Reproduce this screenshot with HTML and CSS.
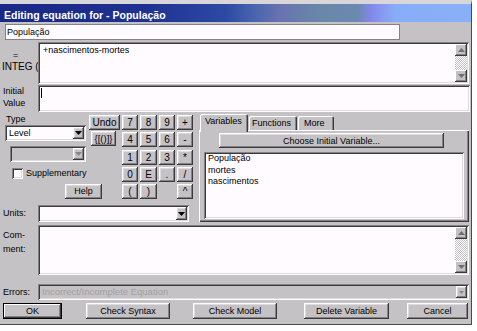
FILE: index.html
```html
<!DOCTYPE html>
<html>
<head>
<meta charset="utf-8">
<link rel="stylesheet" href="styles.css">
</head>
<body>
<div class="win">
  <div class="title">Editing equation for - População</div>
  <div class="content">
    <div class="r-name"><div class="field name">População</div></div>

    <div class="r-eq">
      <div class="lbl eq-lbl"><div class="eqsign">=</div><div class="integ">INTEG (</div></div>
      <div class="field sunken eq">
        <div class="txt">+nascimentos-mortes</div>
        <div class="vscroll">
          <div class="sbtn"><svg width="7" height="4" viewBox="0 0 7 4"><polygon points="3.5,0 7,4 0,4" fill="#707070"/></svg></div>
          <div class="track"></div>
          <div class="sbtn"><svg width="7" height="4" viewBox="0 0 7 4"><polygon points="0,0 7,0 3.5,4" fill="#707070"/></svg></div>
        </div>
      </div>
    </div>

    <div class="r-init">
      <div class="lbl init-lbl">Initial<br>Value</div>
      <div class="field sunken init"><span class="caret"></span></div>
    </div>

    <div class="mid">
      <div class="left">
        <div class="ltop">
          <div class="typecol">
            <div class="typelbl">Type</div>
            <div class="combo sunken level">
              <div class="ctext">Level</div>
              <div class="cbtn raised"><svg width="7" height="4" viewBox="0 0 7 4"><polygon points="0,0 7,0 3.5,4" fill="#000"/></svg></div>
            </div>
            <div class="combo sunken dis">
              <div class="ctext"></div>
              <div class="cbtn raised"><svg width="7" height="4" viewBox="0 0 7 4"><polygon points="0,0 7,0 3.5,4" fill="#8a878a"/></svg></div>
            </div>
            <div class="chkrow"><span class="chk"></span><span class="chklbl">Supplementary</span></div>
            <div class="btn raised help">Help</div>
          </div>
          <div class="undocol">
            <div class="btn raised undo">Undo</div>
            <div class="btn raised brk">{[()]}</div>
          </div>
          <div class="keypad">
            <div class="btn raised k">7</div><div class="btn raised k">8</div><div class="btn raised k">9</div><div class="btn raised k">+</div>
            <div class="btn raised k">4</div><div class="btn raised k">5</div><div class="btn raised k">6</div><div class="btn raised k">-</div>
            <div class="btn raised k">1</div><div class="btn raised k">2</div><div class="btn raised k">3</div><div class="btn raised k">*</div>
            <div class="btn raised k">0</div><div class="btn raised k">E</div><div class="btn raised k">.</div><div class="btn raised k">/</div>
            <div class="btn raised k">(</div><div class="btn raised k">)</div><div class="kempty"></div><div class="btn raised k">^</div>
          </div>
        </div>
        <div class="r-units">
          <div class="lbl units-lbl">Units:</div>
          <div class="combo sunken units">
            <div class="ctext"></div>
            <div class="cbtn raised"><svg width="7" height="4" viewBox="0 0 7 4"><polygon points="0,0 7,0 3.5,4" fill="#000"/></svg></div>
          </div>
        </div>
      </div>

      <div class="tabs">
        <div class="tabstrip">
          <div class="tab sel">Variables</div>
          <div class="tab t-fn">Functions</div>
          <div class="tab t-more">More</div>
        </div>
        <div class="panel">
          <div class="btn raised choose">Choose Initial Variable...</div>
          <div class="list sunken">
            <div>População</div>
            <div>mortes</div>
            <div>nascimentos</div>
          </div>
        </div>
      </div>
    </div>

    <div class="r-comment">
      <div class="lbl com-lbl">Com-<br>ment:</div>
      <div class="field sunken comment">
        <div class="txt"></div>
        <div class="vscroll">
          <div class="sbtn"><svg width="7" height="4" viewBox="0 0 7 4"><polygon points="3.5,0 7,4 0,4" fill="#707070"/></svg></div>
          <div class="track"></div>
          <div class="sbtn"><svg width="7" height="4" viewBox="0 0 7 4"><polygon points="0,0 7,0 3.5,4" fill="#707070"/></svg></div>
        </div>
      </div>
    </div>

    <div class="r-errors">
      <div class="lbl err-lbl">Errors:</div>
      <div class="field sunken errors">
        <div class="errtxt">Incorrect/Incomplete Equation</div>
        <div class="ebtn raised"><svg width="5" height="3" viewBox="0 0 5 3"><polygon points="0,0 5,0 2.5,3" fill="#8a878a"/></svg></div>
      </div>
    </div>

    <div class="r-buttons">
      <div class="btn raised def b-ok">OK</div>
      <div class="btn raised b-syn">Check Syntax</div>
      <div class="btn raised b-mod">Check Model</div>
      <div class="btn raised b-del">Delete Variable</div>
      <div class="btn raised b-can">Cancel</div>
    </div>
  </div>
</div>
</body>
</html>
```

FILE: styles.css
```css
* { box-sizing: border-box; margin: 0; padding: 0; }

body {
  background: #ffffff;
  font-family: "Liberation Sans", Arial, sans-serif;
  font-size: 9px;
  line-height: 11px;
  color: #000;
}

.win {
  width: 472px;
  height: 325px;
  background: #c5c2c5;
  border-top: 4px solid #d9d6d9;
  border-right: 1px solid #4a4a4a;
  border-bottom: 1px solid #4a4a4a;
  display: flex;
  flex-direction: column;
}

.title {
  height: 18px;
  flex: none;
  padding: 5px 0 0 4px;
  color: #fff;
  font-weight: bold;
  font-size: 10.5px;
  line-height: 12px;
  background: linear-gradient(90deg, #182888 0%, #1e3090 30%, #2c4aa4 48%, #4a64ae 54%, #6a74b0 60%, #6888a8 68%, #6c88b0 76%, #8488ee 79%, #8898f2 81%, #88adf8 84%, #88b0f8 100%);
}

.content { display: flex; flex-direction: column; }

.raised {
  background: #c5c2c5;
  box-shadow: inset -1px -1px #3a3a3a, inset 1px 1px #ffffff, inset -2px -2px #858285, inset 2px 2px #dedbde;
}
.sunken {
  background: #fffbff;
  box-shadow: inset 1px 1px #858285, inset -1px -1px #ffffff, inset 2px 2px #3a3a3a, inset -2px -2px #dedbde;
}

.lbl { flex: none; width: 38px; padding-left: 3px; }

/* name */
.r-name { margin-top: 2px; height: 16px; padding-left: 5px; display: flex; }
.field.name {
  width: 395px; height: 16px;
  background: #fffbff;
  box-shadow: inset 1px 1px #858285, inset -1px -1px #858285;
  padding: 0 0 0 2px;
  line-height: 16px;
}

/* equation */
.r-eq { margin-top: 2px; height: 42px; display: flex; }
.eq-lbl { padding-top: 8px; padding-left: 2px; }
.eqsign { padding-left: 11px; line-height: 11px; }
.integ { font-size: 10px; line-height: 11px; white-space: nowrap; }
.field { display: flex; }
.field.eq { width: 431px; height: 42px; padding: 2px; }
.txt { flex: 1; padding: 1px 0 0 3px; }
.vscroll { width: 12px; flex: none; display: flex; flex-direction: column; }
.sbtn {
  height: 12px; flex: none;
  background: #c5c2c5;
  box-shadow: inset -1px -1px #3a3a3a, inset 1px 1px #ffffff, inset -2px -2px #858285;
  display: flex; align-items: center; justify-content: center;
}
.track {
  flex: 1;
  background: repeating-conic-gradient(#ffffff 0 25%, #c5c2c5 0 50%) 0 0 / 2px 2px;
}

/* initial */
.r-init { margin-top: 1px; height: 27px; display: flex; }
.init-lbl { line-height: 12px; padding-left: 3px; }
.field.init { width: 432px; height: 27px; padding: 3px 0 0 3px; }
.caret { display: block; width: 1px; height: 10px; background: #000; }

/* middle */
.mid { margin-top: 2px; height: 108px; display: flex; }
.left { width: 199px; flex: none; display: flex; flex-direction: column; }
.ltop { height: 85px; display: flex; }

.typecol { margin-left: 5px; width: 81px; flex: none; display: flex; flex-direction: column; }
.typelbl { height: 11px; padding-left: 1px; }
.combo { display: flex; height: 16px; padding: 2px; }
.ctext { flex: 1; padding-left: 2px; line-height: 12px; }
.cbtn { width: 11px; flex: none; display: flex; align-items: center; justify-content: center; }
.combo.level { width: 81px; }
.combo.dis { margin-top: 5px; margin-left: 5px; width: 76px; background: #c5c2c5; }
.chkrow { margin-top: 4px; height: 14px; display: flex; align-items: center; }
.chk {
  margin-left: 7px; width: 11px; height: 11px; flex: none;
  background: #fffbff;
  box-shadow: inset 1px 1px #858285, inset -1px -1px #ffffff, inset 2px 2px #3a3a3a, inset -2px -2px #dedbde;
}
.chklbl { margin-left: 3px; line-height: 14px; white-space: nowrap; }

.btn {
  display: flex; align-items: center; justify-content: center;
  white-space: nowrap; flex: none;
}
.help { margin-top: 4px; margin-left: 60px; width: 37px; height: 15px; }

.undocol { margin-left: 3px; width: 31px; flex: none; display: flex; flex-direction: column; }
.undo { margin-top: 1px; width: 31px; height: 15px; font-size: 10px; }
.brk { margin-top: 1px; margin-left: 2px; width: 25px; height: 15px; font-size: 9.5px; }

.keypad {
  margin-left: 2px; margin-top: 1px;
  display: grid;
  grid-template-columns: 16px 17px 16px 16px;
  grid-auto-rows: 15px;
  column-gap: 2px;
  row-gap: 2.25px;
  align-content: start;
}
.k { font-size: 10px; }

.r-units { margin-top: 6px; height: 17px; display: flex; }
.units-lbl { line-height: 17px; }
.combo.units { width: 151px; height: 17px; }

/* tabs */
.tabs { width: 270px; flex: none; display: flex; flex-direction: column; }
.tabstrip { height: 16px; display: flex; align-items: flex-end; }
.tab {
  height: 14px;
  margin-left: 1px;
  padding: 2px 0 0 4px;
  background: #c5c2c5;
  border-radius: 2px 2px 0 0;
  box-shadow: inset 1px 1px #ffffff, inset -1px 0 #3a3a3a, inset -2px 0 #858285;
  white-space: nowrap;
}
.tab.sel {
  width: 48px; height: 18px; margin-bottom: -2px;
  padding: 2px 0 0 5px;
  position: relative; z-index: 1;
}
.t-fn { width: 48px; padding-left: 3px; }
.t-more { width: 36px; padding-left: 6px; }
.panel {
  height: 92px;
  display: flex; flex-direction: column;
  padding-top: 3px;
  box-shadow: inset 1px 1px #ffffff, inset -1px -1px #3a3a3a, inset -2px -2px #858285;
}
.choose { margin-left: 20px; width: 225px; height: 15px; padding-top: 1px; }
.list {
  margin-top: 4px; margin-left: 5px;
  width: 260px; height: 67px;
  padding: 1px 0 0 4px;
  line-height: 11.5px;
}

/* comment */
.r-comment { margin-top: 3px; height: 50px; display: flex; }
.com-lbl { line-height: 14px; padding-top: 3px; }
.field.comment { width: 431px; height: 50px; padding: 2px; }

/* errors */
.r-errors { margin-top: 9px; height: 16px; display: flex; }
.err-lbl { line-height: 16px; }
.field.errors { width: 431px; height: 16px; padding: 2px; background: #c5c2c5; }
.errtxt { flex: 1; padding-left: 2px; line-height: 12px; font-size: 9.5px; color: #a29fa2; white-space: nowrap; }
.ebtn { width: 11px; flex: none; display: flex; align-items: center; justify-content: center; }

/* buttons */
.r-buttons { margin-top: 3px; height: 16px; display: flex; }
.r-buttons .btn { height: 16px; line-height: 16px; }
.def {
  box-shadow: inset 0 0 0 1px #000, inset -2px -2px #3a3a3a, inset 2px 2px #ffffff, inset -3px -3px #858285;
}
.b-ok { margin-left: 3px; width: 59px; }
.b-syn { margin-left: 24px; width: 84px; }
.b-mod { margin-left: 23px; width: 84px; }
.b-del { margin-left: 27px; width: 85px; }
.b-can { margin-left: 18px; width: 61px; }
```
